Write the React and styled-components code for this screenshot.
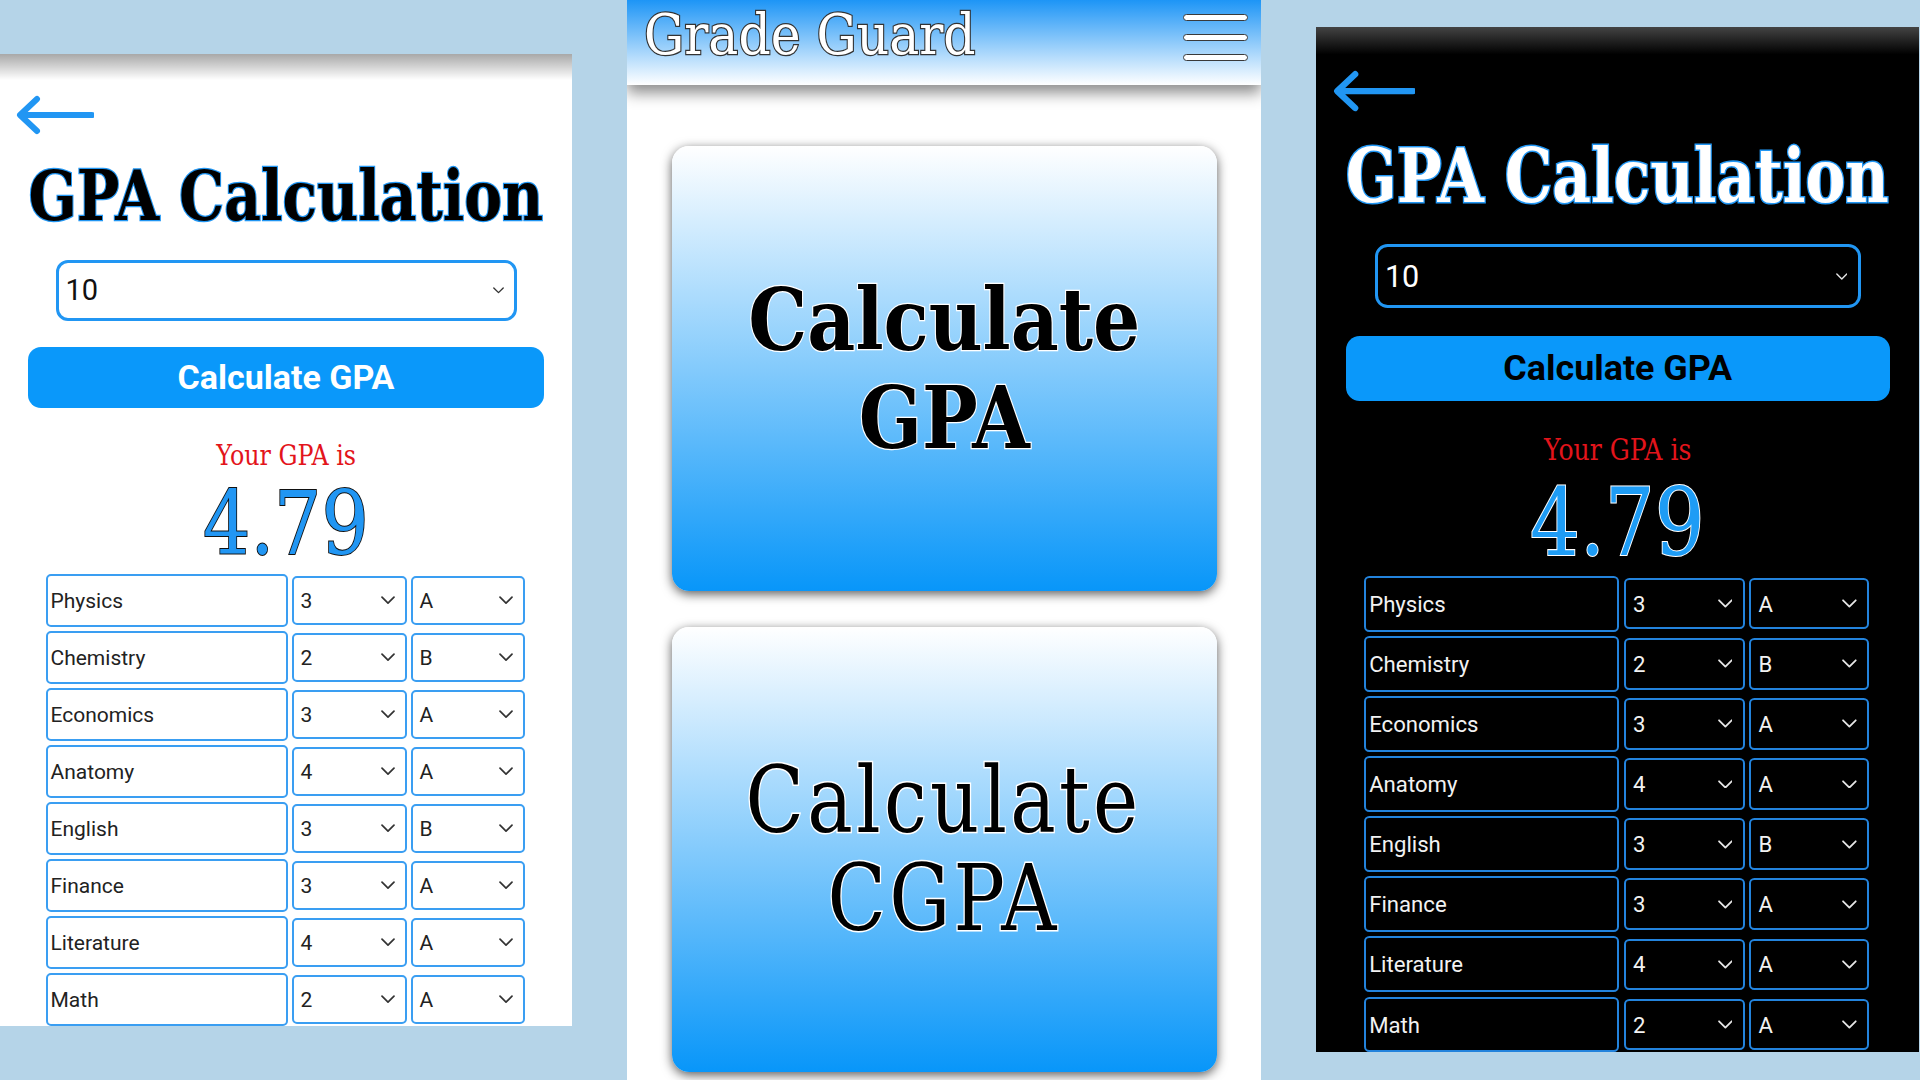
import React from "react";
import styled, { createGlobalStyle } from "styled-components";

const GlobalStyle = createGlobalStyle`
  html, body {
    margin: 0;
    padding: 0;
  }
  body {
    width: 1920px;
    height: 1080px;
    overflow: hidden;
    background: #b5d4e8;
  }
`;

const serif = `"DejaVu Serif", serif`;
const sans = `Roboto, "Liberation Sans", sans-serif`;
const blue = "#2196f3";

const courses = [
  { name: "Physics", units: 3, grade: "A" },
  { name: "Chemistry", units: 2, grade: "B" },
  { name: "Economics", units: 3, grade: "A" },
  { name: "Anatomy", units: 4, grade: "A" },
  { name: "English", units: 3, grade: "B" },
  { name: "Finance", units: 3, grade: "A" },
  { name: "Literature", units: 4, grade: "A" },
  { name: "Math", units: 2, grade: "A" }
];

const Page = styled.div`
  display: flex;
  align-items: flex-start;
  gap: 55px;
  width: 1920px;
  height: 1080px;
  overflow: hidden;
`;

/* phone screens */

const Phone = styled.section`
  flex: none;
  width: 572px;
  height: 972px;
  margin-top: ${props => props.top}px;
  zoom: ${props => props.scale};
  overflow: hidden;
  display: flex;
  flex-direction: column;
  align-items: center;
  background: ${props =>
    props.dark
      ? "linear-gradient(rgba(90, 90, 90, 0.75), rgba(90, 90, 90, 0) 26px), #000"
      : "linear-gradient(rgba(0, 0, 0, 0.34), rgba(0, 0, 0, 0) 26px), #fff"};
`;

const Back = styled.div`
  align-self: stretch;
  height: 40px;
  margin-top: 41px;
  padding-left: 16px;
  display: flex;
  align-items: center;
`;

const Title = styled.h1`
  margin: 26px 0 0;
  font-family: ${serif};
  font-weight: 700;
  font-size: 70px;
  line-height: 70px;
  white-space: nowrap;
  transform: scaleX(0.81);
  color: ${props => (props.dark ? "#fff" : "#000")};
  -webkit-text-stroke: ${props => (props.dark ? "3px" : "2.5px")} ${blue};
  paint-order: stroke fill;
`;

const Term = styled.div`
  box-sizing: border-box;
  width: 461px;
  height: 61px;
  margin-top: 29px;
  padding: 0 10px 0 7px;
  border: 3px solid ${blue};
  border-radius: 12px;
  display: flex;
  align-items: center;
  justify-content: space-between;
  font-family: ${sans};
  font-size: 29px;
  color: ${props => (props.dark ? "#fff" : "#111")};
`;

const CalcButton = styled.button`
  width: 516px;
  height: 62px;
  margin-top: 26px;
  border: none;
  border-radius: 13px;
  background: #0a98fa;
  font-family: ${sans};
  font-weight: 700;
  font-size: 34px;
  color: ${props => (props.dark ? "#000" : "#fff")};
`;

const ResultLabel = styled.div`
  margin-top: 32px;
  font-family: ${serif};
  font-size: 28px;
  line-height: 32px;
  transform: scaleX(0.85);
  color: #e3141b;
`;

const Score = styled.div`
  margin-top: 8px;
  font-family: ${serif};
  font-size: 88px;
  line-height: 88px;
  transform: scaleX(0.846);
  color: ${props => (props.dark ? "#1e9cf5" : "#2196f3")};
  -webkit-text-stroke: 2px ${props => (props.dark ? "#fff" : "#111")};
  paint-order: stroke fill;
`;

const Table = styled.div`
  margin: 6px 2px 0 0;
  display: flex;
  flex-direction: column;
  gap: 4px;
`;

const Row = styled.div`
  display: grid;
  grid-template-columns: 242px 115px 114px;
  column-gap: 4px;
  align-items: center;
`;

const Cell = styled.div`
  box-sizing: border-box;
  height: ${props => (props.picker ? 49 : 53)}px;
  padding: ${props => (props.picker ? "0 10px 0 7px" : "0 8px 0 3px")};
  border: 2px solid ${props => (props.dark ? "#2383dc" : "#3a9ef2")};
  border-radius: 5px;
  display: flex;
  align-items: center;
  justify-content: space-between;
  font-family: ${sans};
  font-size: 21px;
  color: ${props => (props.dark ? "#f2f2f2" : "#222")};
`;

/* home screen */

const Home = styled.main`
  flex: none;
  width: 634px;
  height: 1080px;
  overflow: hidden;
  background: #fff;
  display: flex;
  flex-direction: column;
  align-items: center;
`;

const Header = styled.header`
  position: relative;
  z-index: 1;
  align-self: stretch;
  box-sizing: border-box;
  height: 85px;
  padding: 0 13px 0 17px;
  display: flex;
  align-items: flex-start;
  justify-content: space-between;
  background: linear-gradient(#1d95f6, #fff);
  box-shadow: 0 8px 14px rgba(0, 0, 0, 0.45);
`;

const Brand = styled.div`
  margin-top: 7px;
  font-family: ${serif};
  font-size: 56px;
  line-height: 56px;
  white-space: nowrap;
  transform: scaleX(0.9);
  transform-origin: left center;
  color: #fff;
  -webkit-text-stroke: 2.5px #333;
  paint-order: stroke fill;
`;

const Burger = styled.div`
  margin-top: 14px;
  display: flex;
  flex-direction: column;
  gap: 13px;
`;

const Bar = styled.span`
  box-sizing: border-box;
  width: 65px;
  height: 7px;
  border: 1.5px solid #3a3a3a;
  border-radius: 4px;
  background: #fff;
`;

const Tile = styled.button`
  flex: none;
  width: 545px;
  height: 445px;
  margin-top: ${props => props.gap}px;
  padding: 0;
  border: none;
  border-radius: 17px;
  background: linear-gradient(#fff, #0896f9);
  box-shadow: 0 3px 11px rgba(0, 0, 0, 0.65);
  display: flex;
  align-items: center;
  justify-content: center;
`;

const TileLabel = styled.span`
  display: inline-block;
  font-family: ${serif};
  font-weight: ${props => (props.narrow ? 400 : 700)};
  font-size: ${props => (props.narrow ? 92 : 86)}px;
  letter-spacing: ${props => (props.narrow ? 4 : 0)}px;
  line-height: 98px;
  text-align: center;
  transform: scaleX(${props => (props.narrow ? 0.83 : 0.862)});
  color: #000;
  -webkit-text-stroke: ${props => (props.narrow ? 3 : 2.5)}px #fff;
  paint-order: stroke fill;
`;

const ArrowLeft = () => (
  <svg width="78" height="40" viewBox="0 0 78 40">
    <path
      d="M76 20H5M21 4L4 20l17 16"
      fill="none"
      stroke={blue}
      strokeWidth="6"
      strokeLinecap="round"
      strokeLinejoin="round"
    />
  </svg>
);

const Chevron = ({ size, dark }) => (
  <svg width={size} height={size * 0.6} viewBox="0 0 14 8.4">
    <path
      d="M1 1.2l6 6 6-6"
      fill="none"
      stroke={dark ? "#e6e6e6" : "#333"}
      strokeWidth="1.7"
      strokeLinecap="round"
      strokeLinejoin="round"
    />
  </svg>
);

const Calculator = ({ dark, top, scale }) => (
  <Phone dark={dark} top={top} scale={scale}>
    <Back>
      <ArrowLeft />
    </Back>
    <Title dark={dark}>GPA Calculation</Title>
    <Term dark={dark}>
      10
      <Chevron size={11} dark={dark} />
    </Term>
    <CalcButton dark={dark}>Calculate GPA</CalcButton>
    <ResultLabel>Your GPA is</ResultLabel>
    <Score dark={dark}>4.79</Score>
    <Table>
      {courses.map(course => (
        <Row key={course.name}>
          <Cell dark={dark}>{course.name}</Cell>
          <Cell dark={dark} picker>
            {course.units}
            <Chevron size={14} dark={dark} />
          </Cell>
          <Cell dark={dark} picker>
            {course.grade}
            <Chevron size={14} dark={dark} />
          </Cell>
        </Row>
      ))}
    </Table>
  </Phone>
);

const App = () => (
  <>
    <GlobalStyle />
    <Page>
      <Calculator top={54} scale={1} />
      <Home>
        <Header>
          <Brand>Grade Guard</Brand>
          <Burger>
            <Bar />
            <Bar />
            <Bar />
          </Burger>
        </Header>
        <Tile gap={61}>
          <TileLabel>
            Calculate
            <br />
            GPA
          </TileLabel>
        </Tile>
        <Tile gap={36}>
          <TileLabel narrow>
            Calculate
            <br />
            CGPA
          </TileLabel>
        </Tile>
      </Home>
      <Calculator dark top={25.6} scale={1.055} />
    </Page>
  </>
);

export default App;
